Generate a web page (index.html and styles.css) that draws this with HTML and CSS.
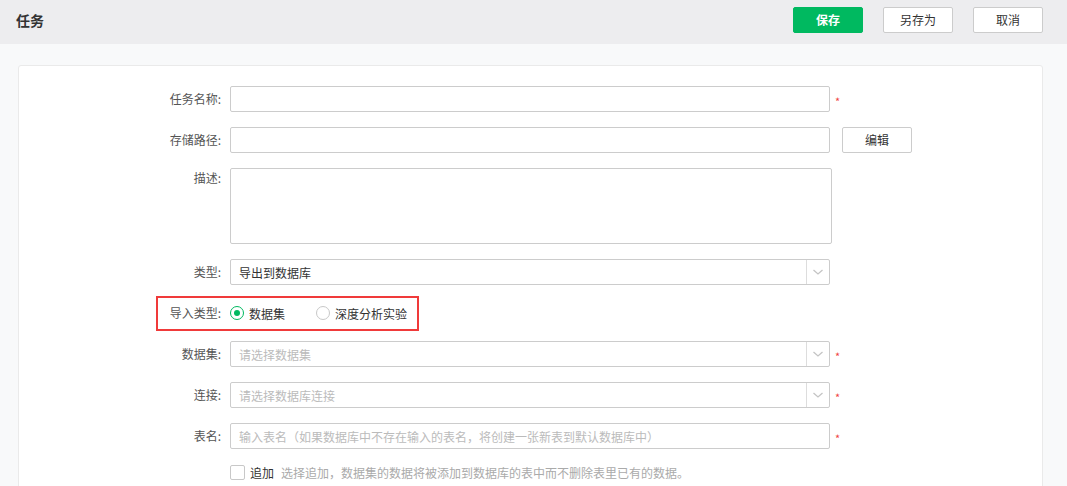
FILE: index.html
```html
<!DOCTYPE html>
<html lang="zh">
<head>
<meta charset="utf-8">
<title>任务</title>
<link rel="stylesheet" href="styles.css">
</head>
<body>
<header class="topbar">
  <div class="title">任务</div>
  <div class="actions">
    <button class="btn btn-primary">保存</button>
    <button class="btn">另存为</button>
    <button class="btn">取消</button>
  </div>
</header>
<main class="page">
  <section class="card">
    <div class="form">
      <div class="row">
        <label class="label">任务名称:</label>
        <div class="field"><div class="input"></div></div>
        <span class="req">*</span>
      </div>
      <div class="row">
        <label class="label">存储路径:</label>
        <div class="field"><div class="input"></div></div>
        <button class="btn btn-side">编辑</button>
      </div>
      <div class="row row-top">
        <label class="label">描述:</label>
        <div class="field"><div class="textarea"></div></div>
      </div>
      <div class="row">
        <label class="label">类型:</label>
        <div class="field">
          <div class="select"><span class="value">导出到数据库</span><span class="arrow"><svg width="12" height="8" viewBox="0 0 12 8"><path d="M1.5 2 L6 6 L10.5 2" fill="none" stroke="#c4c4c4" stroke-width="1.3"/></svg></span></div>
        </div>
      </div>
      <div class="row row-radio">
        <div class="highlight"></div>
        <label class="label">导入类型:</label>
        <div class="field radios">
          <span class="radio on"><span class="dot"></span></span><span class="radio-text">数据集</span>
          <span class="radio"></span><span class="radio-text">深度分析实验</span>
        </div>
      </div>
      <div class="row">
        <label class="label">数据集:</label>
        <div class="field">
          <div class="select"><span class="ph">请选择数据集</span><span class="arrow"><svg width="12" height="8" viewBox="0 0 12 8"><path d="M1.5 2 L6 6 L10.5 2" fill="none" stroke="#c4c4c4" stroke-width="1.3"/></svg></span></div>
        </div>
        <span class="req">*</span>
      </div>
      <div class="row">
        <label class="label">连接:</label>
        <div class="field">
          <div class="select"><span class="ph">请选择数据库连接</span><span class="arrow"><svg width="12" height="8" viewBox="0 0 12 8"><path d="M1.5 2 L6 6 L10.5 2" fill="none" stroke="#c4c4c4" stroke-width="1.3"/></svg></span></div>
        </div>
        <span class="req">*</span>
      </div>
      <div class="row">
        <label class="label">表名:</label>
        <div class="field"><div class="input"><span class="ph">输入表名（如果数据库中不存在输入的表名，将创建一张新表到默认数据库中）</span></div></div>
        <span class="req">*</span>
      </div>
      <div class="row row-check">
        <span class="label"></span>
        <div class="field checkline">
          <span class="checkbox"></span><span class="check-text">追加</span><span class="hint">选择追加，数据集的数据将被添加到数据库的表中而不删除表里已有的数据。</span>
        </div>
      </div>
    </div>
  </section>
</main>
</body>
</html>
```

FILE: styles.css
```css
* { box-sizing: border-box; }
html, body { margin: 0; padding: 0; }
body {
  font-family: "Noto Sans CJK SC", "Noto Sans", "Liberation Sans", sans-serif;
  font-size: 12px;
  color: #333;
  background: #f8f9fa;
  width: 1067px;
  height: 486px;
  overflow: hidden;
}
.topbar {
  height: 44px;
  background: #ededef;
  display: flex;
  align-items: center;
  justify-content: space-between;
  padding: 0 24px 0 16px;
}
.title {
  font-size: 14px;
  font-weight: bold;
  color: #333;
  margin-top: -4px;
}
.actions {
  display: flex;
  gap: 20px;
  margin-top: -5px;
}
.btn {
  width: 70px;
  height: 26px;
  border: 1px solid #ccc;
  background: #fff;
  border-radius: 2px;
  font-family: inherit;
  font-size: 12px;
  color: #333;
  padding: 0;
  line-height: 24px;
}
.btn-primary {
  background: #00b960;
  border-color: #00b960;
  color: #fff;
  font-weight: bold;
}
.page {
  padding: 21px 24px 0 18px;
}
.card {
  background: #fff;
  border: 1px solid #eaeaea;
  border-radius: 3px;
  height: 440px;
  padding-top: 20px;
}
.form {
  display: flex;
  flex-direction: column;
  gap: 15px;
}
.row {
  display: flex;
  align-items: center;
  position: relative;
  height: 26px;
}
.row-top { align-items: flex-start; height: 76px; }
.label {
  width: 203px;
  flex: none;
  text-align: right;
  color: #555;
  padding-right: 1px;
  line-height: 26px;
}
.row-top .label { line-height: 20px; }
.field {
  margin-left: 8px;
  width: 600px;
  flex: none;
}
.input, .select {
  height: 26px;
  border: 1px solid #ccc;
  border-radius: 2px;
  background: #fff;
  display: flex;
  align-items: center;
  padding-left: 8px;
}
.textarea {
  width: 602px;
  height: 76px;
  border: 1px solid #ccc;
  border-radius: 2px;
}
.select { padding-right: 0; }
.select .value, .select .ph { flex: 1; }
.value { color: #333; }
.ph { color: #bbb; }
.arrow {
  width: 23px;
  height: 24px;
  border-left: 1px solid #ddd;
  display: flex;
  align-items: center;
  justify-content: center;
}
.req {
  color: #f04545;
  margin-left: 5px;
  font-size: 11px;
  line-height: 26px;
  padding-top: 3px;
}
.btn-side { margin-left: 12px; }
.radios {
  display: flex;
  align-items: center;
}
.radio {
  width: 14px;
  height: 14px;
  border: 1px solid #c8c8c8;
  border-radius: 50%;
  display: inline-flex;
  align-items: center;
  justify-content: center;
}
.radio.on { border-color: #00b960; }
.radio .dot {
  width: 6px;
  height: 6px;
  border-radius: 50%;
  background: #00b960;
}
.radio-text {
  margin-left: 5px;
  color: #333;
  margin-right: 31px;
}
.highlight {
  position: absolute;
  left: 137px;
  top: -4px;
  width: 263px;
  height: 35px;
  border: 2px solid #f03a3a;
  pointer-events: none;
}
.checkline {
  display: flex;
  align-items: center;
  height: 16px;
}
.row-check { height: 16px; }
.row-check .label { line-height: 16px; }
.checkbox {
  width: 15px;
  height: 15px;
  border: 1px solid #c8c8c8;
  border-radius: 2px;
}
.check-text {
  margin-left: 5px;
  color: #333;
}
.hint {
  margin-left: 7px;
  color: #aaa;
}
```
